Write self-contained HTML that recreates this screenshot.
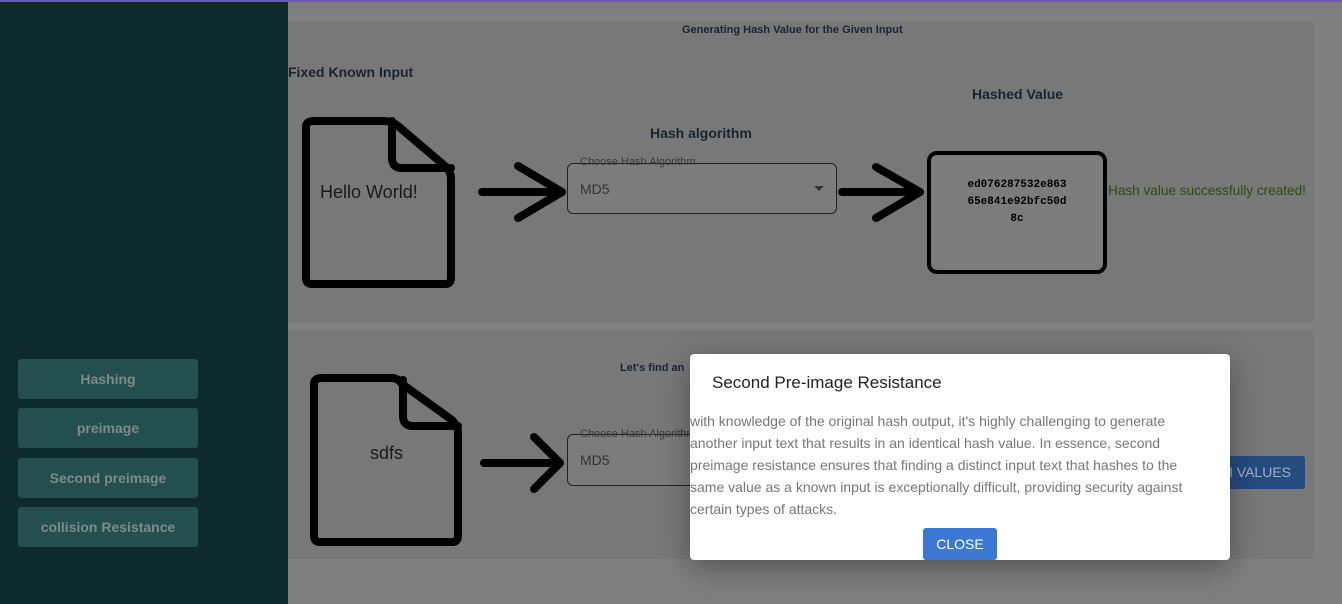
<!DOCTYPE html>
<html><head><meta charset="utf-8"><style>
*{margin:0;padding:0;box-sizing:border-box}
body{width:1342px;height:604px;overflow:hidden;background:#7f7f7f;font-family:"Liberation Sans",sans-serif;position:relative}
.abs{position:absolute}
.top{left:0;top:0;width:1342px;height:2px;background:#6a55c2}
.side{left:0;top:2px;width:288px;height:602px;background:#0d2a2d}
.btn{left:18px;width:180px;height:40px;background:#234f4f;border-radius:3px;color:#7d8a8a;font-weight:bold;font-size:14px;text-align:center;line-height:40px}
.card{background:#787878}
.b{font-weight:bold;color:#1c2330;font-size:14px}
.sel{border:1.5px solid #222;border-radius:6px;background:#7c7c7c}
.lbl{font-size:11px;color:#3a3a3a}
.modal{left:690px;top:354px;width:540px;height:206px;background:#fff;border-radius:4px;box-shadow:0 8px 30px rgba(0,0,0,.35)}
</style></head><body>
<div class="abs top"></div>
<div class="abs side"></div>
<div class="abs btn" style="top:359px">Hashing</div>
<div class="abs btn" style="top:408px">preimage</div>
<div class="abs btn" style="top:458px">Second preimage</div>
<div class="abs btn" style="top:507px">collision Resistance</div>

<div class="abs card" style="left:288px;top:22px;width:1026px;height:300px"></div>
<div class="abs card" style="left:288px;top:330px;width:1026px;height:229px"></div>

<div class="abs b" style="left:682px;top:24px;font-size:11px">Generating Hash Value for the Given Input</div>
<div class="abs b" style="left:288px;top:64px">Fixed Known Input</div>
<div class="abs b" style="left:650px;top:125px">Hash algorithm</div>
<div class="abs b" style="left:972px;top:86px">Hashed Value</div>

<svg class="abs" style="left:0;top:0" width="1342" height="604">
<g fill="none" stroke="#000" stroke-width="8" stroke-linejoin="round" stroke-linecap="round">
<path d="M314 121 H384 Q392 121 398 126 L445 166 Q451 172 451 178 V278 Q451 284 445 284 H312 Q306 284 306 278 V127 Q306 121 314 121Z"/>
<path d="M392 121 V158 Q392 168 402 168 H451"/>
<path d="M322 378 H392 Q398 378 402 384 L452 420 Q458 426 458 432 V536 Q458 542 452 542 H320 Q314 542 314 536 V384 Q314 378 322 378Z"/>
<path d="M403 380 V416 Q403 426 413 426 H458"/>
<path d="M482 192 H560 M518 166 L562 192 L518 218"/>
<path d="M842 192 H918 M876 167 L920 192 L876 218"/>
<path d="M484 463 H560 M534 437 L560 463 L534 489"/>
</g>
<rect x="929" y="153" width="176" height="119" rx="8" fill="#7c7c7c" stroke="#000" stroke-width="4"/>
</svg>
<div class="abs" style="left:320px;top:182px;font-size:18px;color:#1a1a1a">Hello World!</div>
<div class="abs" style="left:370px;top:443px;font-size:18px;color:#1a1a1a">sdfs</div>

<div class="abs sel" style="left:567px;top:163px;width:270px;height:51px"></div>
<div class="abs lbl" style="left:580px;top:156px">Choose Hash Algorithm</div>
<div class="abs" style="left:580px;top:181px;font-size:14px;color:#333">MD5</div>
<div class="abs" style="left:814px;top:186px;width:0;height:0;border-left:5px solid transparent;border-right:5px solid transparent;border-top:5px solid #333"></div>

<div class="abs" style="left:929px;top:177px;width:176px;text-align:center;font-family:'Liberation Mono',monospace;font-size:11px;font-weight:bold;line-height:17px;color:#000">ed076287532e863<br>65e841e92bfc50d<br>8c</div>
<div class="abs" style="left:1108px;top:183px;font-size:13.6px;color:#2f4a10">Hash value successfully created!</div>

<div class="abs b" style="left:620px;top:362px;font-size:11px">Let's find an</div>
<div class="abs sel" style="left:567px;top:434px;width:140px;height:52px"></div>
<div class="abs lbl" style="left:580px;top:428px">Choose Hash Algorithm</div>
<div class="abs" style="left:580px;top:452px;font-size:14px;color:#333">MD5</div>
<div class="abs" style="left:1190px;top:456px;width:115px;height:33px;background:#264b80;border-radius:3px;color:#9fb0c8;font-size:14px;line-height:33px;text-align:right;padding-right:14px">H VALUES</div>

<div class="abs modal">
<div class="abs" style="left:22px;top:19px;font-size:17px;color:#222">Second Pre-image Resistance</div>
<div class="abs" style="left:0;top:56px;width:512px;font-size:14px;line-height:22px;color:#777">with knowledge of the original hash output, it's highly challenging to generate another input text that results in an identical hash value. In essence, second preimage resistance ensures that finding a distinct input text that hashes to the same value as a known input is exceptionally difficult, providing security against certain types of attacks.</div>
<div class="abs" style="left:233px;top:174px;width:74px;height:32px;background:#3a78d4;border-radius:3px;color:#fff;font-size:14px;line-height:32px;text-align:center">CLOSE</div>
</div>
</body></html>
